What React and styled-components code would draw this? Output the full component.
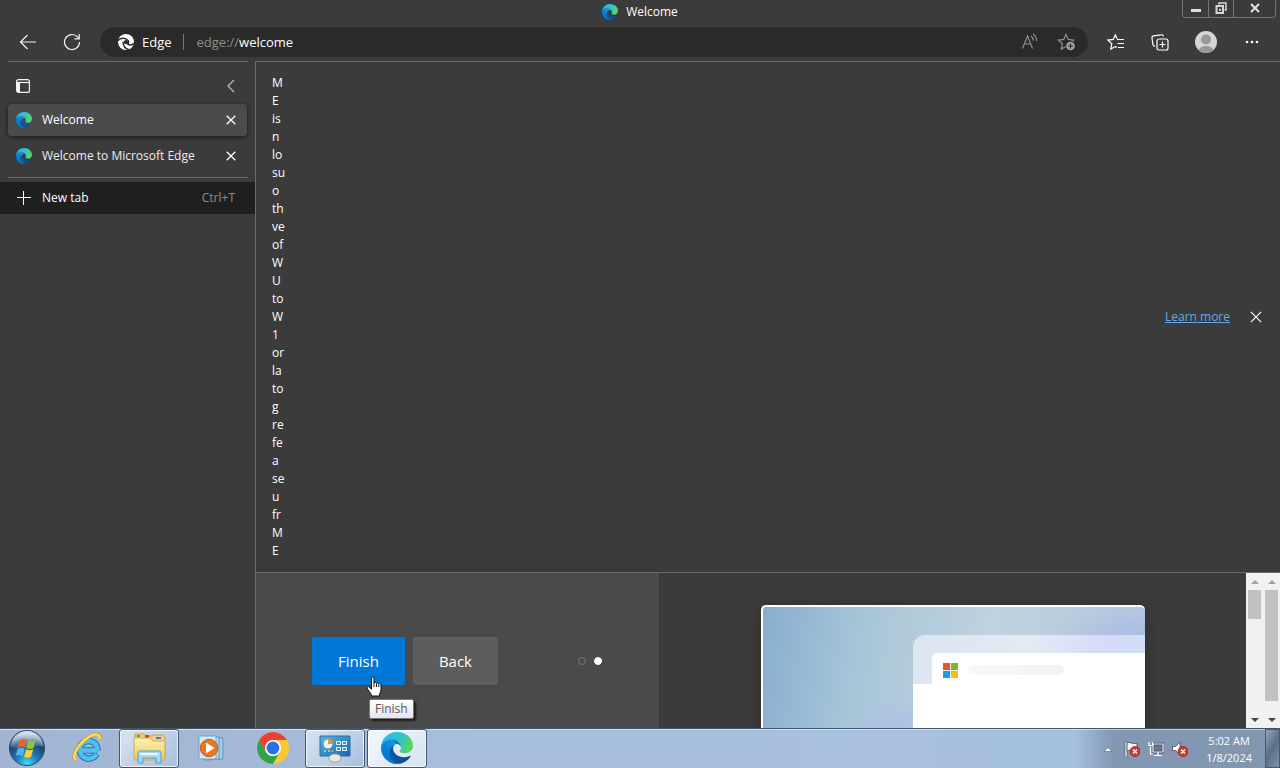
import React, { useId } from "react";
import styled, { createGlobalStyle, css } from "styled-components";

const GlobalStyle = createGlobalStyle`
  *, *::before, *::after { box-sizing: border-box; }
  body {
    margin: 0;
    background: #3b3b3b;
    color: #fff;
    font-family: "Open Sans", "Noto Sans", sans-serif;
    font-size: 12px;
    line-height: 18px;
  }
  button, input { font: inherit; color: inherit; border: 0; padding: 0; margin: 0; background: none; }
  ul { list-style: none; margin: 0; padding: 0; }
  svg { display: block; flex: none; }
`;

const Screen = styled.div`
  display: flex;
  flex-direction: column;
  min-height: 100vh;
`;

/* Title bar */

const TitleBar = styled.header`
  display: grid;
  grid-template-columns: 1fr auto 1fr;
  height: 24px;
`;

const WindowTitle = styled.div`
  grid-column: 2;
  display: flex;
  align-items: center;
  gap: 8px;
`;

const WindowControls = styled.div`
  display: flex;
  justify-self: end;
  height: 18px;
  margin-right: 4px;
  border: 1px solid #747474;
  border-top: 0;
  border-radius: 0 0 4px 4px;
`;

const WindowButton = styled.button`
  display: grid;
  place-items: center;
  width: ${({ $wide }) => ($wide ? 42 : 25)}px;
  padding-bottom: 2px;
  & + & { border-left: 1px solid #747474; }
`;

/* Toolbar */

const Toolbar = styled.nav`
  display: flex;
  align-items: center;
  height: 37px;
  padding: 0 6px 2px;
`;

const ToolButton = styled.button`
  display: grid;
  place-items: center;
  flex: none;
  width: ${({ $wide }) => ($wide ? 48 : 44)}px;
  height: 30px;
`;

const AddressBar = styled.form`
  display: flex;
  align-items: center;
  flex: 1;
  height: 30px;
  margin: 0 6px;
  padding: 0 4px 0 18px;
  border-radius: 15px;
  background: #2a2a2a;
  font-size: 13px;
`;

const SiteBadge = styled.div`
  display: flex;
  align-items: center;
  gap: 8px;
  padding-right: 11px;
  margin-right: 13px;
  border-right: 1px solid #757575;
  line-height: 16px;
`;

const UrlField = styled.label`
  display: flex;
  flex: 1;
  color: #8f8f8f;
`;

const UrlInput = styled.input`
  flex: 1;
  min-width: 0;
  color: #fff;
  outline: 0;
`;

const AddressButton = styled.button`
  display: grid;
  place-items: center;
  width: 36px;
  height: 30px;
`;

/* Body */

const Body = styled.div`
  display: flex;
  flex: 1;
`;

const Sidebar = styled.aside`
  flex: none;
  width: 256px;
  border-right: 1px solid #6b6b6b;
`;

const Rule = styled.div`
  height: 1px;
  margin: 0 7px 0 8px;
  background: #6b6b6b;
`;

const SidebarHeader = styled.div`
  display: flex;
  justify-content: space-between;
  align-items: center;
  height: 42px;
  padding: 6px 16px 0 15px;
`;

const IconButton = styled.button`
  display: grid;
  place-items: center;
  width: 16px;
  height: 16px;
`;

const TabList = styled.ul`
  display: grid;
  gap: 4px;
  padding: 0 8px 5px;
`;

const Tab = styled.li`
  display: flex;
  align-items: center;
  gap: 10px;
  height: 32px;
  padding: 0 8px;
  border-radius: 4px;
  color: #ececec;
  ${({ $active }) => $active && css`
    background: #4b4b4b;
    color: #fff;
    box-shadow: 0 1px 4px rgba(0, 0, 0, 0.6);
  `}
`;

const TabTitle = styled.span`
  flex: 1;
  white-space: nowrap;
`;

const NewTab = styled.button`
  display: flex;
  align-items: center;
  gap: 10px;
  width: 100%;
  height: 32px;
  margin-top: 4px;
  padding: 0 20px 0 16px;
  background: #1f1f1f;
  text-align: left;
`;

const Shortcut = styled.kbd`
  font: inherit;
  color: #8e8e8e;
`;

const Main = styled.main`
  display: flex;
  flex-direction: column;
  flex: 1;
  min-width: 0;
  border-top: 1px solid #6b6b6b;
`;

const Notice = styled.section`
  display: flex;
  align-items: center;
  padding: 12px 16px 12px;
  border-bottom: 1px solid #6b6b6b;
`;

const NoticeText = styled.p`
  display: flex;
  flex-direction: column;
  flex: 1;
  margin: 0;
`;

const NoticeLink = styled.a`
  margin-right: 18px;
  color: #66a9e8;
`;

const Page = styled.div`
  display: flex;
  flex: 1 0 155px;
  height: 155px;
  overflow: hidden;
`;

const StepPane = styled.section`
  flex: none;
  width: 403px;
  padding: 64px 57px 0 56px;
  background: #4a4a4a;
`;

const StepRow = styled.div`
  display: flex;
  align-items: center;
  gap: 8px;
`;

const StepButton = styled.button`
  position: relative;
  height: 48px;
  padding: 0 26px;
  border-radius: 2px;
  background: ${({ $primary }) => ($primary ? "#0078d7" : "#5d5d5d")};
  font-size: 15px;
`;

const Pointer = styled.svg`
  position: absolute;
  left: 53px;
  top: 39px;
`;

const Tooltip = styled.span`
  position: absolute;
  left: 57px;
  top: 62px;
  padding: 0 5px;
  border: 1px solid #767676;
  border-radius: 2px;
  background: linear-gradient(#fff, #e4e5f0);
  box-shadow: 2px 2px 2px rgba(0, 0, 0, 0.6);
  color: #575757;
  font-size: 12px;
  line-height: 18px;
`;

const Dots = styled.div`
  display: flex;
  gap: 8px;
  margin-left: auto;
`;

const Dot = styled.span`
  width: 8px;
  height: 8px;
  border: 1px solid ${({ $on }) => ($on ? "#fff" : "#777")};
  border-radius: 50%;
  background: ${({ $on }) => ($on ? "#fff" : "none")};
`;

const PreviewPane = styled.section`
  flex: 1;
  display: flex;
  justify-content: center;
  padding-top: 32px;
`;

const Preview = styled.div`
  width: 384px;
  height: 240px;
  padding: 28px 0 0 150px;
  border: 2px solid #fff;
  border-right: 0;
  border-radius: 5px;
  overflow: hidden;
  box-shadow: 0 2px 12px rgba(0, 0, 0, 0.3);
  background:
    radial-gradient(ellipse 100px 40px at 100% 14%, #a9bbe6, transparent),
    radial-gradient(ellipse 60px 40px at 36% 54%, #a9c0e8, transparent),
    linear-gradient(100deg, #88adcf, #a8c6d8 25%, #bfd2e0 55%, #b4c7dd);
`;

const PreviewWindow = styled.div`
  height: 220px;
  padding: 18px 0 0 19px;
  border-radius: 12px 0 0 0;
  background:
    linear-gradient(#fff, #fff) 0 49px / 100% 200px no-repeat,
    linear-gradient(100deg, #dae6f0, #e3eaf4 45%, #d4dcf7 70%, #cfdcf5);
`;

const PreviewSheet = styled.div`
  display: flex;
  align-items: flex-start;
  gap: 10px;
  height: 100px;
  padding: 9px 10px;
  border-radius: 5px 0 0 5px;
  background: #fff;
`;

const Placeholder = styled.div`
  width: 96px;
  height: 10px;
  margin-top: 3px;
  border-radius: 5px;
  background: linear-gradient(90deg, #f8f8f9, #f2f2f4);
`;

const Scrollbar = styled.div`
  display: flex;
  flex-direction: column;
  align-items: center;
  flex: none;
  width: 17px;
  background: #f1f1f1;
`;

const ScrollArrow = styled.button`
  display: grid;
  place-items: center;
  width: 17px;
  height: 17px;
`;

const Track = styled.div`
  flex: 1;
`;

const Thumb = styled.div`
  width: 13px;
  height: ${({ $length }) => $length}%;
  background: #c1c1c1;
`;

/* Taskbar */

const Taskbar = styled.footer`
  display: flex;
  height: 40px;
  border-top: 1px solid #40566c;
  background:
    linear-gradient(90deg, #a2b4d1, #a7bfdd 40%, #a5c0dd 84%, #8298b3 87%, #8296af);
  box-shadow: inset 0 1px 0 rgba(255, 255, 255, 0.5);
`;

const StartButton = styled.button`
  display: grid;
  place-items: center;
  width: 55px;
  padding: 0 1px 1px 0;
`;

const TaskList = styled.div`
  display: flex;
  flex: 1;
  gap: 2px;
  padding-left: 2px;
`;

const TaskButton = styled.button`
  display: grid;
  place-items: center;
  width: 60px;
  padding-bottom: 2px;
  border: 1px solid transparent;
  border-radius: 3px;
  ${({ $state }) => $state && css`
    border-color: #44566d;
    box-shadow: inset 0 0 0 1px rgba(255, 255, 255, 0.75);
    background: ${$state === "active"
      ? "linear-gradient(135deg, #f4f8fd, #d5e2f2)"
      : "linear-gradient(135deg, #d8e4f3, #a9bfdd)"};
  `}
`;

const Tray = styled.div`
  display: flex;
  align-items: center;
  gap: 8px;
`;

const TrayButton = styled.button`
  display: grid;
  place-items: center;
  width: 16px;
  height: 24px;
`;

const Clock = styled.time`
  margin-left: 10px;
  margin-right: 5px;
  font-size: 11px;
  line-height: 17px;
  text-align: center;
`;

const ShowDesktop = styled.button`
  align-self: stretch;
  width: 15px;
  border: 1px solid #4a5a6e;
  background: linear-gradient(120deg, #91a4ba, #5c6f86 50%, #8094ac);
`;

function EdgeLogo({ size, bright }) {
  const id = useId();
  return (
    <svg width={size} height={size} viewBox="0 0 256 256" aria-hidden="true">
      <defs>
        <linearGradient id={id + "a"} x1="63" y1="178" x2="241" y2="178" gradientUnits="userSpaceOnUse">
          <stop offset="0" stopColor="#0c59a4" />
          <stop offset="1" stopColor="#114a8b" />
        </linearGradient>
        <linearGradient id={id + "b"} x1="157" y1="99" x2="46" y2="221" gradientUnits="userSpaceOnUse">
          <stop offset="0" stopColor={bright ? "#1b9de2" : "#1468b4"} />
          <stop offset=".16" stopColor="#1595df" />
          <stop offset=".67" stopColor="#0680d7" />
          <stop offset="1" stopColor="#0078d4" />
        </linearGradient>
        <linearGradient id={id + "c"} x1="20" y1="60" x2="250" y2="140" gradientUnits="userSpaceOnUse">
          <stop offset="0" stopColor="#35b8ee" />
          <stop offset=".5" stopColor="#2fc2cf" />
          <stop offset="1" stopColor="#5fd84f" />
        </linearGradient>
      </defs>
      <g transform="translate(-4.63 -4.92)">
        <path fill={`url(#${id}a)`} d="M235.68 195.46a93.73 93.73 0 01-10.54 4.71 101.87 101.87 0 01-35.9 6.46c-47.32 0-88.54-32.55-88.54-74.32A31.48 31.48 0 01117.13 105c-42.8 1.8-53.8 46.4-53.8 72.53 0 73.88 68.09 81.37 82.76 81.37 7.91 0 19.84-2.3 27-4.56l1.31-.44a128.34 128.34 0 0066.6-52.8 4 4 0 00-5.32-5.64z" />
        <path fill={`url(#${id}b)`} d="M110.34 246.34A79.2 79.2 0 0187.6 225a80.72 80.72 0 0129.53-120c3.12-1.47 8.45-4.13 15.54-4a32.35 32.35 0 0125.69 13 31.88 31.88 0 016.36 18.66c0-.21 24.46-79.6-80-79.6-43.9 0-80 41.66-80 78.21a130.15 130.15 0 0012.11 56 128 128 0 00156.38 67.11 75.55 75.55 0 01-62.78-8z" />
        <path fill={`url(#${id}c)`} d="M156.94 153.78c-.81 1.05-3.3 2.5-3.3 5.66 0 2.61 1.7 5.12 4.72 7.23 14.38 10 41.49 8.68 41.56 8.68a59.56 59.56 0 0030.27-8.35 61.38 61.38 0 0030.43-52.88c.26-22.41-8-37.31-11.34-43.91C228.09 28.76 182.35 4.92 132.61 4.92a128 128 0 00-128 126.2c.48-36.54 36.8-66.05 80-66.05 3.5 0 23.46.34 42 10.07 16.34 8.58 24.9 18.94 30.85 29.21 6.18 10.67 7.28 24.15 7.28 29.52s-2.74 13.33-7.8 19.91z" />
      </g>
    </svg>
  );
}

const MonoEdge = () => (
  <svg width="16" height="16" viewBox="0 0 16 16" aria-hidden="true">
    <circle cx="8" cy="8" r="8" fill="#fff" />
    <g fill="none" stroke="#2a2a2a" strokeWidth="1.5" strokeLinecap="round">
      <path d="M0 6.5C2.4 3.6 7.6 3.4 10.2 6.6" />
      <path d="M5.2 8.2c-.4 3.5 2.3 6.8 5.6 7.2" />
      <path d="M10.4 7.2c.5 1.2 0 2.3-.6 3 1.700 1.200 4.200.8 5.900-.6" />
    </g>
    <circle cx="8" cy="8.200" r="2.100" fill="#2a2a2a" />
  </svg>
);

const Cross = ({ size = 10, width = 1.2 }) => (
  <svg width={size} height={size} viewBox="0 0 10 10" fill="none" stroke="#fff" strokeWidth={width} aria-hidden="true">
    <path d="M.7.7l8.600 8.600M9.300.7L.7 9.300" />
  </svg>
);

const starPath = "M9 1.500l2.300 4.900 5.300.7-3.900 3.700 1 5.300L9 13.500l-4.700 2.600 1-5.300L1.400 7.100l5.300-.7z";

function TitleRow() {
  return (
    <TitleBar>
      <WindowTitle><EdgeLogo size={16} bright />Welcome</WindowTitle>
      <WindowControls>
        <WindowButton aria-label="Minimize">
          <svg width="12" height="12"><rect x="1" y="7" width="10" height="3" fill="#e0e0e0" /></svg>
        </WindowButton>
        <WindowButton aria-label="Restore">
          <svg width="12" height="12" fill="none" stroke="#d5d5d5" strokeWidth="1.500">
            <path d="M4 2.500V1h7v7H9.500" /><path d="M1.500 4h6.500v7H1.500z" strokeWidth="2" /><path d="M4.500 7h1v1.500h-1z" strokeWidth="1" />
          </svg>
        </WindowButton>
        <WindowButton $wide aria-label="Close">
          <svg width="10" height="10" fill="none" stroke="#e0e0e0" strokeWidth="2"><path d="M1 1l8 8M9 1L1 9" /></svg>
        </WindowButton>
      </WindowControls>
    </TitleBar>
  );
}

function ToolbarRow() {
  return (
    <Toolbar>
      <ToolButton aria-label="Back">
        <svg width="18" height="16" fill="none" stroke="#f2f2f2" strokeWidth="1.200"><path d="M17 8H1.500M8.500 1L1.500 8l7 7" /></svg>
      </ToolButton>
      <ToolButton aria-label="Refresh">
        <svg width="18" height="18" fill="none" stroke="#f2f2f2" strokeWidth="1.200">
          <path d="M16.500 9a7.500 7.500 0 1 1-2-5.100l1.500 1.700" /><path d="M16.200 1v4.800h-4.700" />
        </svg>
      </ToolButton>
      <AddressBar onSubmit={(e) => e.preventDefault()}>
        <SiteBadge><MonoEdge />Edge</SiteBadge>
        <UrlField>
          edge://<UrlInput defaultValue="welcome" aria-label="Address" />
        </UrlField>
        <AddressButton type="button" aria-label="Read aloud">
          <svg width="18" height="18" fill="none" stroke="#939393" strokeWidth="1.100">
            <path d="M1.500 15.500L6.500 3l5 12.500M3.400 11h6.200" /><path d="M10 3c1.500 1 2.200 2.500 2.300 4.500" /><path d="M12 1c2.500 1.700 3.700 4.200 3.700 7" />
          </svg>
        </AddressButton>
        <AddressButton type="button" aria-label="Add to favorites">
          <svg width="18" height="18" fill="none" stroke="#939393" strokeWidth="1.200">
            <path d={starPath} /><circle cx="13.500" cy="13" r="5" fill="#2a2a2a" stroke="none" />
            <circle cx="13.500" cy="13" r="4.300" fill="#a5a5a5" stroke="none" /><path d="M13.500 10.500v5M11 13h5" stroke="#2a2a2a" />
          </svg>
        </AddressButton>
      </AddressBar>
      <ToolButton aria-label="Favorites">
        <svg width="18" height="18" fill="none" stroke="#fff" strokeWidth="1.200">
          <path d="M10.300 6L8.300 1.800 6.200 6.400l-5.300.7 3.900 3.700-1 5.300 4.500-2.500 1.500.8M10 6.500h7M10.500 10.500H17M11 14.500h6" />
        </svg>
      </ToolButton>
      <ToolButton aria-label="Collections">
        <svg width="18" height="18" fill="none" stroke="#fff" strokeWidth="1.200">
          <path d="M4 13.200c-1.300.1-1.900-.5-2.100-1.500L1 5c-.2-1.300.4-2 1.600-2.200l7.600-1c1.200-.2 2 .3 2.200 1.500" />
          <rect x="6" y="6" width="11" height="11" rx="2" /><path d="M11.500 8.500v6M8.500 11.500h6" />
        </svg>
      </ToolButton>
      <ToolButton $wide aria-label="Profile">
        <svg width="22" height="22">
          <defs><clipPath id="avatar"><circle cx="11" cy="11" r="11" /></clipPath></defs>
          <g clipPath="url(#avatar)"><rect width="22" height="22" fill="#d6d6d6" /><circle cx="11" cy="8.500" r="5" fill="#989898" /><ellipse cx="11" cy="20" rx="7.500" ry="5" fill="#989898" /></g>
        </svg>
      </ToolButton>
      <ToolButton aria-label="Settings and more">
        <svg width="14" height="4" fill="#fff"><circle cx="2" cy="2" r="1.300" /><circle cx="7" cy="2" r="1.300" /><circle cx="12" cy="2" r="1.300" /></svg>
      </ToolButton>
    </Toolbar>
  );
}

const tabs = [
  { title: "Welcome", active: true },
  { title: "Welcome to Microsoft Edge", active: false },
];

function TabsSidebar() {
  return (
    <Sidebar>
      <Rule />
      <SidebarHeader>
        <IconButton aria-label="Tab actions">
          <svg width="14" height="14" fill="none" stroke="#f2f2f2" strokeWidth="1.200">
            <rect x=".6" y=".6" width="12.800" height="12.800" rx="2" /><path d="M1 3.500h12" /><path d="M2.500 4v9" strokeWidth="3" />
          </svg>
        </IconButton>
        <IconButton aria-label="Collapse pane">
          <svg width="8" height="14" fill="none" stroke="#bdbdbd" strokeWidth="1.200"><path d="M7 1L1 7l6 6" /></svg>
        </IconButton>
      </SidebarHeader>
      <TabList>
        {tabs.map((tab) => (
          <Tab key={tab.title} $active={tab.active}>
            <EdgeLogo size={16} bright={tab.active} />
            <TabTitle>{tab.title}</TabTitle>
            <IconButton aria-label={`Close ${tab.title}`}><Cross size={10} width={1.3} /></IconButton>
          </Tab>
        ))}
      </TabList>
      <Rule />
      <NewTab>
        <svg width="16" height="16" fill="none" stroke="#fff"><path d="M7.500 1v14M1 7.500h14" /></svg>
        <TabTitle>New tab</TabTitle>
        <Shortcut>Ctrl+T</Shortcut>
      </NewTab>
    </Sidebar>
  );
}

const noticeLines = "M E is n lo su o th ve of W U to W 1 or la to g re fe a se u fr M E".split(" ");

function ScrollColumn({ length }) {
  return (
    <Scrollbar>
      <ScrollArrow aria-label="Scroll up"><svg width="8" height="4" fill="#a0a0a0"><path d="M0 4l4-4 4 4z" /></svg></ScrollArrow>
      <Track><Thumb $length={length} /></Track>
      <ScrollArrow aria-label="Scroll down"><svg width="8" height="4" fill="#454545"><path d="M0 0l4 4 4-4z" /></svg></ScrollArrow>
    </Scrollbar>
  );
}

function Content() {
  return (
    <Main>
      <Notice>
        <NoticeText>{noticeLines.map((line, i) => <span key={i}>{line}</span>)}</NoticeText>
        <NoticeLink href="#learn-more">Learn more</NoticeLink>
        <IconButton aria-label="Dismiss"><Cross size={12} width={1} /></IconButton>
      </Notice>
      <Page>
        <StepPane>
          <StepRow>
            <StepButton $primary>
              Finish
              <Pointer width="20" height="22" viewBox="0 0 20 22" fill="#fff" stroke="#111" strokeWidth="1">
                <path d="M6.500 2c0-1.300 2.500-1.300 2.500 0v5c.5-1 2.200-.8 2.500.3.500-.8 2-.6 2.300.5.800-.6 2.200 0 2.200 1.300v4.400c0 2.500-1.500 3-1.500 6.500h-8c0-3-3.500-5-4.500-8-.4-1.400 1.200-2 2.300-.8l2.200 2z" />
                <path d="M9 7v4M11.500 7.500V11M13.800 8.500V11" fill="none" />
              </Pointer>
              <Tooltip role="tooltip">Finish</Tooltip>
            </StepButton>
            <StepButton>Back</StepButton>
            <Dots><Dot /><Dot $on /></Dots>
          </StepRow>
        </StepPane>
        <PreviewPane>
          <Preview>
            <PreviewWindow>
              <PreviewSheet>
                <svg width="16" height="16"><path fill="#e8542b" d="M1 1h7v7H1z" /><path fill="#7fba1c" d="M9 1h7v7H9z" /><path fill="#12a0e8" d="M1 9h7v7H1z" /><path fill="#f9bd10" d="M9 9h7v7H9z" /></svg>
                <Placeholder />
              </PreviewSheet>
            </PreviewWindow>
          </Preview>
        </PreviewPane>
        <ScrollColumn length={24} />
        <ScrollColumn length={92} />
      </Page>
    </Main>
  );
}

const StartOrb = () => (
  <svg width="38" height="38" viewBox="0 0 38 38" aria-hidden="true">
    <defs>
      <radialGradient id="orb" cx=".5" cy=".95" r=".85"><stop offset="0" stopColor="#45dcf5" /><stop offset=".4" stopColor="#1b76b5" /><stop offset=".75" stopColor="#1a4675" /><stop offset="1" stopColor="#7f9cb8" /></radialGradient>
      <linearGradient id="orbShine" x2="0" y2="1"><stop offset="0" stopColor="#fff" stopOpacity=".75" /><stop offset="1" stopColor="#fff" stopOpacity=".1" /></linearGradient>
    </defs>
    <circle cx="19" cy="19" r="17.500" fill="url(#orb)" stroke="#274766" />
    <path d="M3 18a16 16 0 0 1 32 0c-8-4-22 4-32 0z" fill="url(#orbShine)" />
    <path fill="#f0602a" d="M12 11c2.500-1.500 4.500-1.300 7 0l-2 7.500c-2.500-1.300-4.500-1.400-7 0z" />
    <path fill="#8cc63c" d="M20.300 11.600c2.500 1.300 4.500 1.300 7.200 0l-2 7.400c-2.500 1.400-4.800 1.300-7.200 0z" />
    <path fill="#4fb5ee" d="M9.700 19.700c2.500-1.300 4.500-1.300 7 0l-2 7.300c-2.500-1.300-4.500-1.300-7 0z" />
    <path fill="#fcd03a" d="M18 20.300c2.500 1.300 4.500 1.300 7.200 0l-2 7.400c-2.500 1.400-4.800 1.300-7.200 0z" />
  </svg>
);

const IeIcon = () => (
  <svg width="32" height="32" viewBox="0 0 32 32" fill="none" aria-hidden="true">
    <path d="M26.500 18.500H9.500M26.500 18.500C26.500 6 9 6 9 17.500c0 11 13 11.500 16.500 4.500" stroke="#1679bd" strokeWidth="6.500" />
    <path d="M26.500 18.500H9.500M26.500 18.500C26.500 6 9 6 9 17.500c0 11 13 11.500 16.500 4.500" stroke="#52c0ef" strokeWidth="4.500" />
    <path d="M5 29C-1 25 8 11 17 5.500 24 1 30 1 29 7" stroke="#d99d13" strokeWidth="3.400" />
    <path d="M5 28.500C-.5 24.500 8.500 11 17 5.500 24 1 29.500 1.500 28.500 7" stroke="#fbe05c" strokeWidth="2.200" />
  </svg>
);

const ExplorerIcon = () => (
  <svg width="34" height="32" viewBox="0 0 34 32" aria-hidden="true">
    <defs><linearGradient id="folder" x2="0" y2="1"><stop offset="0" stopColor="#fdf2b4" /><stop offset="1" stopColor="#e9c85e" /></linearGradient></defs>
    <path d="M3 2h9l2 2h6l2-1h9l2 3v20H3z" fill="#efd27b" stroke="#c6a249" />
    <path d="M5 3h3v2H5z" fill="#4a9e3d" /><path d="M13 3h4v3h-4z" fill="#d8442b" /><path d="M24 5h5v2h-5z" fill="#3c7fd0" />
    <path d="M2 6h16l3 3h12v19H2z" fill="url(#folder)" stroke="#cfae54" />
    <path d="M6 31V20.500c0-1 1-1.500 2-1.500h19c1 0 2 .5 2 1.500V31h-5v-5H11v5z" fill="#a5d8f4" stroke="#4b9fd0" />
    <path d="M8 22h18" stroke="#e8f8ff" strokeWidth="2" />
  </svg>
);

const MediaIcon = () => (
  <svg width="28" height="28" viewBox="0 0 28 28" aria-hidden="true">
    <path d="M10 3l16 1v21l-16 1z" fill="#a6cce5" stroke="#5b99c3" /><path d="M7 2l15 1v22L7 26z" fill="#b9dbef" stroke="#5b99c3" />
    <path d="M2 2h17v23H2z" fill="#d4e9f5" stroke="#69a5ca" />
    <circle cx="12" cy="14" r="8.700" fill="#ee7621" stroke="#c95b13" /><path d="M9 8.500l8.500 5.500L9 19.500z" fill="#fff" />
  </svg>
);

const ChromeIcon = () => (
  <svg width="32" height="32" viewBox="0 0 32 32" aria-hidden="true">
    <circle cx="16" cy="16" r="16" fill="#fcc934" />
    <path d="M16 8h13.850A16 16 0 0 0 2.150 8l6.930 12z" fill="#ea4335" />
    <path d="M2.150 8A16 16 0 0 0 16 32l6.930-12A8 8 0 0 1 9.070 20z" fill="#2fa24e" />
    <circle cx="16" cy="16" r="8" fill="#fff" /><circle cx="16" cy="16" r="6.400" fill="#2970e8" />
  </svg>
);

const ControlPanelIcon = () => (
  <svg width="32" height="30" viewBox="0 0 32 30" aria-hidden="true">
    <defs><linearGradient id="panel" x2="1" y2="1"><stop offset="0" stopColor="#55b6ea" /><stop offset="1" stopColor="#1767ac" /></linearGradient></defs>
    <path d="M1 3h30v20H1z" fill="url(#panel)" stroke="#2f6c9e" />
    <circle cx="9" cy="11" r="4.500" fill="#e8f3fa" /><path d="M9 11V5.500A5 5 0 0 1 14 11z" fill="#f09124" />
    <path d="M17.500 8.500h4v3h-4zM23.500 8.500h4v3h-4zM17.500 14.500h4v3h-4zM23.500 14.500h4v3h-4z" fill="#3d94d0" stroke="#e8f6ff" />
    <path d="M5 18h2M9 18h2M13 18h1" stroke="#f6d45a" strokeWidth="1.500" />
    <ellipse cx="16" cy="25" rx="6" ry="4" fill="#ece9e3" stroke="#a6a19a" />
  </svg>
);

const RedCross = () => (
  <g><circle cx="11" cy="10.500" r="5" fill="#dc3326" stroke="#8f2019" strokeWidth=".7" /><path d="M9 8.500l4 4M13 8.500l-4 4" stroke="#fff" strokeWidth="1.600" /></g>
);

const tasks = [
  { name: "Internet Explorer", icon: <IeIcon /> },
  { name: "Windows Explorer", icon: <ExplorerIcon />, state: "open" },
  { name: "Windows Media Player", icon: <MediaIcon /> },
  { name: "Google Chrome", icon: <ChromeIcon /> },
  { name: "Control Panel", icon: <ControlPanelIcon />, state: "open" },
  { name: "Microsoft Edge", icon: <EdgeLogo size={32} />, state: "active" },
];

function DesktopTaskbar() {
  return (
    <Taskbar>
      <StartButton aria-label="Start"><StartOrb /></StartButton>
      <TaskList>
        {tasks.map((task) => (
          <TaskButton key={task.name} $state={task.state} aria-label={task.name}>{task.icon}</TaskButton>
        ))}
      </TaskList>
      <Tray>
        <TrayButton aria-label="Show hidden icons"><svg width="10" height="6"><path d="M1 5.500l4-4 4 4z" fill="#fff" stroke="#4d6077" strokeWidth=".6" /></svg></TrayButton>
        <TrayButton aria-label="Action Center">
          <svg width="16" height="16" viewBox="0 0 16 16"><path d="M1 .5h2V16H1z" fill="#fff" stroke="#444" strokeWidth=".6" /><path d="M3 2c3-2 5 2 10 0v8c-4 2-7-2-10 0z" fill="#f2f5f8" stroke="#444" strokeWidth=".8" /><RedCross /></svg>
        </TrayButton>
        <TrayButton aria-label="Network">
          <svg width="16" height="16" viewBox="0 0 16 16" fill="none"><path d="M5 3h10v8H5z" fill="#65798f" stroke="#2d3a48" strokeWidth="2.400" /><path d="M5 3h10v8H5z" stroke="#fff" strokeWidth="1.200" /><path d="M6 14.500h8M10 11v3M2.500 6v7H5M1 1v3.500h3.500V1" stroke="#fff" strokeWidth="1.200" /></svg>
        </TrayButton>
        <TrayButton aria-label="Volume">
          <svg width="16" height="16" viewBox="0 0 16 16"><path d="M.5 5.500h3L8 1v13l-4.500-4.500h-3z" fill="#fff" stroke="#444" strokeWidth=".8" /><RedCross /></svg>
        </TrayButton>
        <Clock dateTime="2024-01-08T05:02">5:02 AM<br />1/8/2024</Clock>
        <ShowDesktop aria-label="Show desktop" />
      </Tray>
    </Taskbar>
  );
}

export default function App() {
  return (
    <Screen>
      <GlobalStyle />
      <TitleRow />
      <ToolbarRow />
      <Body>
        <TabsSidebar />
        <Content />
      </Body>
      <DesktopTaskbar />
    </Screen>
  );
}
